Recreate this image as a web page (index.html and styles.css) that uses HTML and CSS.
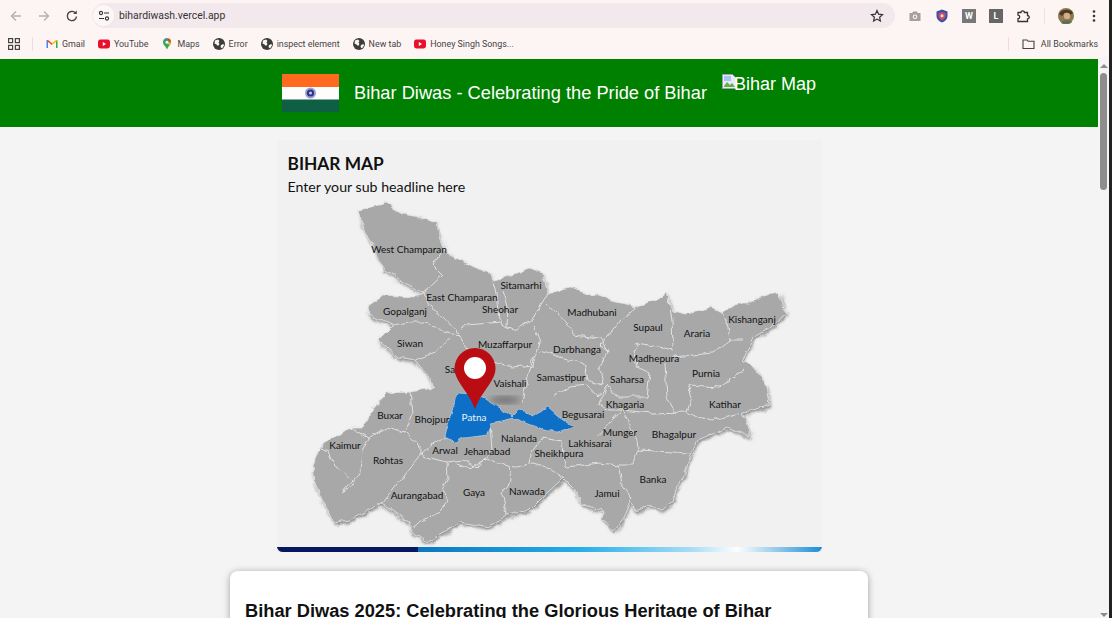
FILE: index.html
```html
<!DOCTYPE html>
<html lang="en">
<head>
  <meta charset="UTF-8" />
  <title>Bihar Diwas</title>
  <link rel="stylesheet" href="styles.css">
</head>
<body>
  <svg class="defs" width="0" height="0">
    <symbol id="globe" viewBox="0 0 12 12">
      <circle cx="6" cy="6" r="6" fill="#3c3c3c"/>
      <path d="M2 2.5 5 1.5 6.5 3 5.5 4.5 6.5 6 5 8 3.5 6.5 1.5 5.5ZM8 7l2.5-1 .5 1.5L9 10.5 7.5 9Z" fill="#fdf5f4"/>
    </symbol>
    <symbol id="yt" viewBox="0 0 12 12">
      <rect x="0" y="1.5" width="12" height="9" rx="2.4" fill="#e8112d"/>
      <path d="M4.8 3.9 8 6 4.8 8.1Z" fill="#fff"/>
    </symbol>
  </svg>

  <div class="window">
    <!-- browser toolbar -->
    <div class="toolbar">
      <div class="nav-btns">
        <svg class="ico" viewBox="0 0 14 14"><path d="M12 7H2.5M7 2.5 2.5 7 7 11.5" fill="none" stroke="#b5b1b1" stroke-width="1.4"/></svg>
        <svg class="ico" viewBox="0 0 14 14"><path d="M2 7h9.5M7 2.5 11.5 7 7 11.5" fill="none" stroke="#b5b1b1" stroke-width="1.4"/></svg>
        <svg class="ico" viewBox="0 0 14 14"><path d="M11.5 7.5A4.6 4.6 0 1 1 10 3.6" fill="none" stroke="#444" stroke-width="1.4"/><path d="M11.8 1.5v3.6H8.2Z" fill="#444"/></svg>
      </div>
      <div class="omnibox">
        <span class="site-info">
          <svg width="12" height="12" viewBox="0 0 12 12"><circle cx="3" cy="3" r="1.6" fill="none" stroke="#333" stroke-width="1.1"/><path d="M6 3h5M1 8.5h5" stroke="#333" stroke-width="1.1"/><circle cx="9" cy="8.5" r="1.6" fill="none" stroke="#333" stroke-width="1.1"/></svg>
        </span>
        <span class="url">bihardiwash.vercel.app</span>
        <svg class="star" width="14" height="14" viewBox="0 0 14 14"><path d="M7 1.6 8.6 5.2l3.9.4-2.9 2.6.8 3.8L7 10.1 3.6 12l.8-3.8L1.500 5.600l3.900-.4Z" fill="none" stroke="#333" stroke-width="1.2"/></svg>
      </div>
      <div class="extensions">
        <svg width="14" height="14" viewBox="0 0 14 14"><path d="M1.500 4h2.700l1-1.500h3.600l1 1.500h2.700v8h-11Z" fill="#a3a09f"/><circle cx="7" cy="7.800" r="2.300" fill="#fdf5f4"/><circle cx="7" cy="7.800" r="1.200" fill="#a3a09f"/></svg>
        <svg width="14" height="14" viewBox="0 0 14 14"><path d="M7 .5 12.500 2.500V7c0 3-2.500 5.500-5.500 6.500C4 12.500 1.500 10 1.500 7V2.500Z" fill="#2f56a8"/><path d="M7 3 10.500 4.300V7C10.500 9 9 10.500 7 11.300 5 10.500 3.500 9 3.500 7V4.300Z" fill="#d8475f"/><circle cx="7" cy="6.800" r="1.500" fill="#e9e3ea"/></svg>
        <span class="ext-box">W</span>
        <span class="ext-box ext-dark">L</span>
        <svg width="15" height="15" viewBox="0 0 15 15"><path d="M2 4.500h3a1.700 1.700 0 1 1 3.400 0h3.100v3a1.700 1.700 0 1 1 0 3.400v2.600H2v-2.900a1.700 1.700 0 0 0 0-3.400Z" fill="none" stroke="#333" stroke-width="1.300"/></svg>
        <span class="tb-sep"></span>
        <svg class="avatar" width="16" height="16" viewBox="0 0 16 16"><circle cx="8" cy="8" r="8" fill="#8b7a4e"/><path d="M1 6C3 1 12 0 15 5L12 7 7 4.500 4 8Z" fill="#4b3a22"/><circle cx="9" cy="8" r="3.200" fill="#d9ab8c"/><path d="M3 15c1-3 8-4 11-1-2 2.500-8 3-11 1Z" fill="#5f6f55"/></svg>
        <svg class="dots" width="4" height="14" viewBox="0 0 4 14"><circle cx="2" cy="2.500" r="1.300" fill="#333"/><circle cx="2" cy="7" r="1.300" fill="#333"/><circle cx="2" cy="11.500" r="1.300" fill="#333"/></svg>
      </div>
    </div>

    <!-- bookmarks -->
    <div class="bookmarks">
      <svg class="apps" width="12" height="12" viewBox="0 0 12 12"><g fill="none" stroke="#444" stroke-width="1.200"><rect x=".6" y=".6" width="4" height="4"/><rect x="7.400" y=".6" width="4" height="4"/><rect x=".6" y="7.400" width="4" height="4"/><rect x="7.400" y="7.400" width="4" height="4"/></g></svg>
      <span class="bm-sep"></span>
      <a class="bm">
        <svg width="12" height="12" viewBox="0 0 12 12"><path d="M.5 10V2.500L2 2v8Z" fill="#4285f4"/><path d="M10 10V2l1.500.5V10Z" fill="#34a853"/><path d="M2 2 6 5.300 6 7 .5 2.800Z" fill="#ea4335"/><path d="M10 2 6 5.300V7l5.500-4.200Z" fill="#fbbc04"/></svg>
        Gmail</a>
      <a class="bm"><svg width="12" height="12"><use href="#yt"/></svg>YouTube</a>
      <a class="bm">
        <svg width="12" height="12" viewBox="0 0 12 12"><path d="M6 .3A4 4 0 0 1 10 4.300C10 7 7 8.500 6 11.700 5 8.500 2 7 2 4.300A4 4 0 0 1 6 .3Z" fill="#34a853"/><path d="M3 1.700A4 4 0 0 1 6 .3L4.500 3Z" fill="#4285f4"/><path d="M6 .3A4 4 0 0 1 10 4.300L7.500 3.500Z" fill="#ea4335"/><path d="M10 4.300C10 5.500 9 6.500 8 7.700L7 5Z" fill="#fbbc04"/><circle cx="6" cy="4.300" r="1.500" fill="#fff"/></svg>
        Maps</a>
      <a class="bm"><svg width="12" height="12"><use href="#globe"/></svg>Error</a>
      <a class="bm"><svg width="12" height="12"><use href="#globe"/></svg>inspect element</a>
      <a class="bm"><svg width="12" height="12"><use href="#globe"/></svg>New tab</a>
      <a class="bm"><svg width="12" height="12"><use href="#yt"/></svg>Honey Singh Songs...</a>
      <span class="bm-spacer"></span>
      <span class="bm-sep"></span>
      <a class="bm bm-all">
        <svg width="13" height="12" viewBox="0 0 13 12"><path d="M1 2h4l1.200 1.300H12V10.500H1Z" fill="none" stroke="#444" stroke-width="1.100"/></svg>
        All Bookmarks</a>
    </div>

    <!-- page + scrollbar -->
    <div class="viewport">
      <div class="page">
        <header class="site-header">
          <svg class="flag" width="57" height="38" viewBox="0 0 57 38">
            <rect width="57" height="13" fill="#ff6a1f"/>
            <rect y="13" width="57" height="13" fill="#fdfdfd"/>
            <rect y="25.500" width="57" height="12.500" fill="#0f5f44"/>
            <circle cx="28.500" cy="19" r="5.500" fill="#9aa0d0"/>
            <circle cx="28.500" cy="19" r="3.600" fill="#2c3488"/>
            <circle cx="28.500" cy="19" r="1.500" fill="#c8cbe6"/>
          </svg>
          <h1 class="site-title">Bihar Diwas - Celebrating the Pride of Bihar</h1>
          <span class="broken-img">
            <svg class="broken-ico" width="16" height="16" viewBox="0 0 16 16"><path d="M.5.5h10l4 4v10H.5Z" fill="#e6ecf5" stroke="#9aa3ad"/><path d="M2 12l3-4 3 3 2-2 3 4H2Z" fill="#6fa84f"/><path d="M2 2h7v5H2Z" fill="#a9c4ef"/></svg>Bihar Map
          </span>
        </header>

        <main class="content">
          <figure class="map-card">
            <div class="map-head">
              <h2 class="map-title">BIHAR MAP</h2>
              <p class="map-sub">Enter your sub headline here</p>
            </div>
            <svg class="map-svg" width="545" height="412" viewBox="277 140 545 412">
              <defs>
                <filter id="lift" filterUnits="userSpaceOnUse" x="277" y="140" width="545" height="412">
                  <feDropShadow dx="1" dy="2.500" stdDeviation="1.500" flood-color="#6f6f6f" flood-opacity=".75"/>
                </filter>
                <filter id="rough" filterUnits="userSpaceOnUse" x="277" y="140" width="545" height="412">
                  <feTurbulence type="fractalNoise" baseFrequency=".11" numOctaves="2" seed="4" result="noise"/>
                  <feDisplacementMap in="SourceGraphic" in2="noise" scale="6" xChannelSelector="R" yChannelSelector="G" result="moved"/>
                  <feGaussianBlur in="moved" stdDeviation=".3"/>
                </filter>
                <filter id="soft"><feGaussianBlur stdDeviation="3"/></filter>
                <linearGradient id="barGrad" x1="0" x2="1" y1="0" y2="0">
                  <stop offset="0" stop-color="#0a76c0"/>
                  <stop offset=".4" stop-color="#25aee8"/>
                  <stop offset=".68" stop-color="#a9def6"/>
                  <stop offset=".79" stop-color="#fdfeff"/>
                  <stop offset="1" stop-color="#1c8ed6"/>
                </linearGradient>
              </defs>

              <g filter="url(#rough)">
                <path class="land" filter="url(#lift)" d="M359 210 372 207 386 202 392 208 400 213 418 217 437 223 440 240 447 253 460 260 473 267 490 273 495 280 512 275 530 268 542 273 548 293 570 288 585 293 600 295 618 303 635 308 657 300 667 293 673 312 685 315 697 313 710 307 722 313 737 303 748 303 767 295 780 293 782 307 787 313 770 328 753 338 743 360 752 367 767 385 770 405 743 413 750 430 750 437 727 427 698 440 690 455 685 473 677 485 673 502 662 510 650 505 635 510 630 502 623 520 615 530 602 520 603 510 583 505 575 490 563 478 547 493 530 510 507 515 490 527 460 522 428 542 410 530 410 523 382 503 350 520 333 522 315 483 313 465 320 447 350 427 363 427 373 408 387 393 410 392 433 388 430 378 415 360 397 357 378 340 393 325 368 315 367 307 383 295 413 297 423 293 400 280 383 268 372 243 360 220Z"/>

                <g class="borders">
                  <polyline points="440,253 433,265 443,275 432,285 423,293"/>
                  <polyline points="423,293 433,310 443,317 460,335"/>
                  <polyline points="393,325 410,322 425,322 447,333 460,335"/>
                  <polyline points="450,338 433,353 415,360"/>
                  <polyline points="460,335 463,343 467,348 480,362"/>
                  <polyline points="460,327 467,325 490,323 500,322 507,327 517,330 533,318 542,303 548,293"/>
                  <polyline points="493,280 497,293 500,320"/>
                  <polyline points="503,290 508,307 507,327"/>
                  <polyline points="493,362 513,367 533,365 535,357 540,343 533,325"/>
                  <polyline points="547,305 567,323 573,335 600,338 608,352"/>
                  <polyline points="608,352 600,345 607,337 620,320 635,308"/>
                  <polyline points="540,350 560,357 583,363 587,380 603,385 600,367 608,352"/>
                  <polyline points="533,357 526,385 523,403"/>
                  <polyline points="553,397 570,387 587,385 598,397"/>
                  <polyline points="608,385 615,397 647,397 650,373 637,367 633,350 638,343 673,350"/>
                  <polyline points="668,293 672,320 673,347"/>
                  <polyline points="665,363 667,397 675,412"/>
                  <polyline points="673,357 713,353 730,340 743,340"/>
                  <polyline points="722,313 728,327 730,340"/>
                  <polyline points="743,370 730,380 720,387 688,385 692,397 687,412 650,413"/>
                  <polyline points="687,412 697,417 713,420 740,413"/>
                  <polyline points="650,413 623,410 637,440 638,450 690,453"/>
                  <polyline points="598,397 608,385 598,405 610,410 623,410"/>
                  <polyline points="597,437 612,420 623,410"/>
                  <polyline points="490,425 492,450 477,467 463,460 447,462 420,455 382,503"/>
                  <polyline points="420,455 433,443 445,437"/>
                  <polyline points="407,433 420,447 420,455"/>
                  <polyline points="410,392 412,413 405,433"/>
                  <polyline points="350,427 368,438 387,428 405,433"/>
                  <polyline points="368,438 362,450 360,472 350,487 342,492 352,480 333,463 328,450 320,447"/>
                  <polyline points="447,462 448,477 442,490 448,500 440,510 413,527"/>
                  <polyline points="457,463 470,468 487,458 510,468"/>
                  <polyline points="510,468 512,480 502,493 507,515"/>
                  <polyline points="513,468 533,463 547,467 563,478"/>
                  <polyline points="530,463 533,450 543,437 560,440 567,467 600,463"/>
                  <polyline points="600,463 618,465 632,465 638,450"/>
                  <polyline points="618,465 622,483 632,498 630,502"/>
                </g>

                <path class="patna" d="M458 392 470 393 487 400 500 408 513 417 520 410 533 415 548 407 557 415 575 427 557 432 540 428 513 418 492 423 488 435 463 438 455 443 445 437 452 410 457 397Z"/>
              </g>
              <ellipse class="pin-shadow" cx="505" cy="400" rx="15" ry="4" filter="url(#soft)"/>

              <g class="labels">
                <text x="409" y="253">West Champaran</text>
                <text x="462" y="301">East Champaran</text>
                <text x="521" y="289">Sitamarhi</text>
                <text x="500" y="313">Sheohar</text>
                <text x="592" y="316">Madhubani</text>
                <text x="405" y="315">Gopalganj</text>
                <text x="410" y="347">Siwan</text>
                <text x="505" y="348">Muzaffarpur</text>
                <text x="577" y="353">Darbhanga</text>
                <text x="648" y="331">Supaul</text>
                <text x="697" y="337">Araria</text>
                <text x="752" y="323">Kishanganj</text>
                <text x="654" y="362">Madhepura</text>
                <text x="706" y="377">Purnia</text>
                <text x="627" y="383">Saharsa</text>
                <text x="561" y="381">Samastipur</text>
                <text x="510" y="387">Vaishali</text>
                <text x="457" y="373">Saran</text>
                <text x="625" y="408">Khagaria</text>
                <text x="725" y="408">Katihar</text>
                <text x="583" y="418">Begusarai</text>
                <text x="390" y="419">Buxar</text>
                <text x="432" y="423">Bhojpur</text>
                <text class="label-light" x="474" y="421">Patna</text>
                <text x="620" y="436">Munger</text>
                <text x="674" y="438">Bhagalpur</text>
                <text x="519" y="442">Nalanda</text>
                <text x="590" y="447">Lakhisarai</text>
                <text x="345" y="449">Kaimur</text>
                <text x="445" y="454">Arwal</text>
                <text x="487" y="455">Jehanabad</text>
                <text x="559" y="457">Sheikhpura</text>
                <text x="388" y="464">Rohtas</text>
                <text x="653" y="483">Banka</text>
                <text x="474" y="496">Gaya</text>
                <text x="527" y="495">Nawada</text>
                <text x="607" y="497">Jamui</text>
                <text x="417" y="499">Aurangabad</text>
              </g>

              <path class="pin" d="M475 348A20.500 20.500 0 0 1 495.500 368.500C495.500 381 481 392 475 409 469 392 454.500 381 454.500 368.500A20.500 20.500 0 0 1 475 348Z"/>
              <circle class="pin-hole" cx="475" cy="368" r="11"/>

              <path d="M277 547H418V552H283Q278 552 277 547Z" fill="#04175f"/>
              <path d="M418 547H822Q821 552 816 552H418Z" fill="url(#barGrad)"/>
            </svg>
          </figure>

          <article class="post-card">
            <h2 class="post-title">Bihar Diwas 2025: Celebrating the Glorious Heritage of Bihar</h2>
          </article>
        </main>
      </div>

      <div class="scrollbar">
        <span class="arrow-up"></span>
        <span class="thumb"></span>
        <span class="arrow-down"></span>
      </div>
    </div>
  </div>
</body>
</html>
```

FILE: styles.css
```css
:root {
  --chrome-bg: #fdf5f4;
  --chrome-text: #444;
  --page-bg: #f4f4f4;
  --green: #008000;
}

* {
  box-sizing: border-box;
}

html, body {
  margin: 0;
  height: 100%;
  overflow: hidden;
}

.defs {
  position: absolute;
}

.window {
  display: flex;
  flex-direction: column;
  height: 618px;
  background-color: var(--chrome-bg);
  border-right: 3px solid #222;
  font-family: Roboto, "Liberation Sans", sans-serif;
}

/* Browser toolbar */
.toolbar {
  display: flex;
  align-items: center;
  height: 31px;
  flex-shrink: 0;
}

.nav-btns {
  display: flex;
  gap: 14px;
  padding-left: 9px;
  width: 92px;
}

.ico {
  width: 14px;
  height: 14px;
}

.omnibox {
  display: flex;
  align-items: center;
  width: 803px;
  height: 25px;
  background-color: #f3e8ec;
  border-radius: 13px;
  padding-left: 1px;
}

.site-info {
  display: flex;
  align-items: center;
  justify-content: center;
  width: 21px;
  height: 21px;
  background-color: #fdf7f8;
  border-radius: 50%;
}

.url {
  margin-left: 5px;
  font-size: 10.400px;
  color: #333;
}

.star {
  margin-left: auto;
  margin-right: 11px;
}

.extensions {
  display: flex;
  align-items: center;
  gap: 13px;
  padding-left: 13px;
}

.ext-box {
  width: 14px;
  height: 14px;
  background-color: #777;
  color: #fff;
  font-size: 9px;
  font-weight: 700;
  line-height: 14px;
  text-align: center;
}

.ext-dark {
  background-color: #666;
}

.tb-sep {
  width: 1px;
  height: 16px;
  background-color: #eee3e2;
}

.dots {
  margin-left: 5px;
}

/* Bookmarks bar */
.bookmarks {
  display: flex;
  align-items: center;
  gap: 13px;
  height: 26px;
  padding-left: 8px;
  padding-right: 11px;
  flex-shrink: 0;
}

.bm {
  display: flex;
  align-items: center;
  gap: 4px;
  font-size: 8.900px;
  color: var(--chrome-text);
  white-space: nowrap;
}

.apps {
  margin-right: -1px;
}

.bm-sep {
  width: 1px;
  height: 14px;
  background-color: #f0dcdb;
}

.bm-spacer {
  flex: 1;
}

.bm-all {
  gap: 6px;
}

/* Page area */
.viewport {
  display: flex;
  flex: 1;
  min-height: 0;
  padding-top: 2px;
}

.page {
  flex: 1;
  overflow: hidden;
  background-color: var(--page-bg);
}

.site-header {
  display: flex;
  justify-content: center;
  align-items: flex-start;
  gap: 15px;
  height: 68px;
  padding-top: 15px;
  background-color: var(--green);
  color: #fff;
  font-family: "Liberation Sans", Arial, sans-serif;
}

.site-title {
  margin: 9px 0 0;
  font-size: 18.250px;
  font-weight: 400;
  line-height: 20px;
}

.broken-img {
  display: flex;
  font-size: 18px;
  line-height: 21px;
}

.broken-ico {
  margin-right: -4px;
}

.content {
  display: flex;
  flex-direction: column;
  align-items: center;
  padding-top: 13px;
}

.map-card {
  position: relative;
  width: 545px;
  height: 412px;
  margin: 0;
  background-color: #f1f1f1;
}

.map-head {
  position: absolute;
  left: 11px;
  top: 13px;
  font-family: Lato, "Open Sans", sans-serif;
  color: #111;
}

.map-title {
  margin: 0;
  font-size: 17.300px;
  font-weight: 700;
  line-height: 22px;
}

.map-sub {
  margin: 3px 0 0;
  font-size: 14.200px;
  line-height: 18px;
}

.map-svg {
  display: block;
}

.land {
  fill: #a8a8a8;
  stroke: #e4e4e4;
  stroke-width: .8;
}

.borders polyline {
  fill: none;
  stroke: #e6e6e6;
  stroke-width: .9;
}

.patna {
  fill: #0b6fc6;
  stroke: #dfeaf5;
  stroke-width: .5;
}

.pin-shadow {
  fill: #555;
  opacity: .6;
}

.pin {
  fill: #b90c13;
}

.pin-hole {
  fill: #fff;
}

.labels text {
  font-family: Lato, "Open Sans", sans-serif;
  font-size: 10px;
  fill: #111;
  text-anchor: middle;
}

.labels .label-light {
  fill: #eaf3fb;
}

.post-card {
  width: 638px;
  height: 120px;
  margin-top: 19px;
  padding: 30px 15px;
  background-color: #fff;
  border-radius: 8px;
  box-shadow: 0 1px 7px rgba(0, 0, 0, .35);
}

.post-title {
  margin: 0;
  font-family: "Liberation Sans", Arial, sans-serif;
  font-size: 18.250px;
  font-weight: 700;
  line-height: 20px;
  color: #111;
}

/* Scrollbar */
.scrollbar {
  display: flex;
  flex-direction: column;
  align-items: center;
  width: 11px;
  background-color: #f6f4f4;
  padding-top: 7px;
  margin-top: -2px;
}

.arrow-up,
.arrow-down {
  width: 0;
  height: 0;
  border-left: 4px solid transparent;
  border-right: 4px solid transparent;
}

.arrow-up {
  border-bottom: 4px solid #8d8a8a;
}

.arrow-down {
  margin-top: auto;
  margin-bottom: 1px;
  border-top: 4px solid #8d8a8a;
}

.thumb {
  width: 7px;
  height: 117px;
  margin-top: 5px;
  background-color: #8f8c8c;
  border-radius: 4px;
}
```
